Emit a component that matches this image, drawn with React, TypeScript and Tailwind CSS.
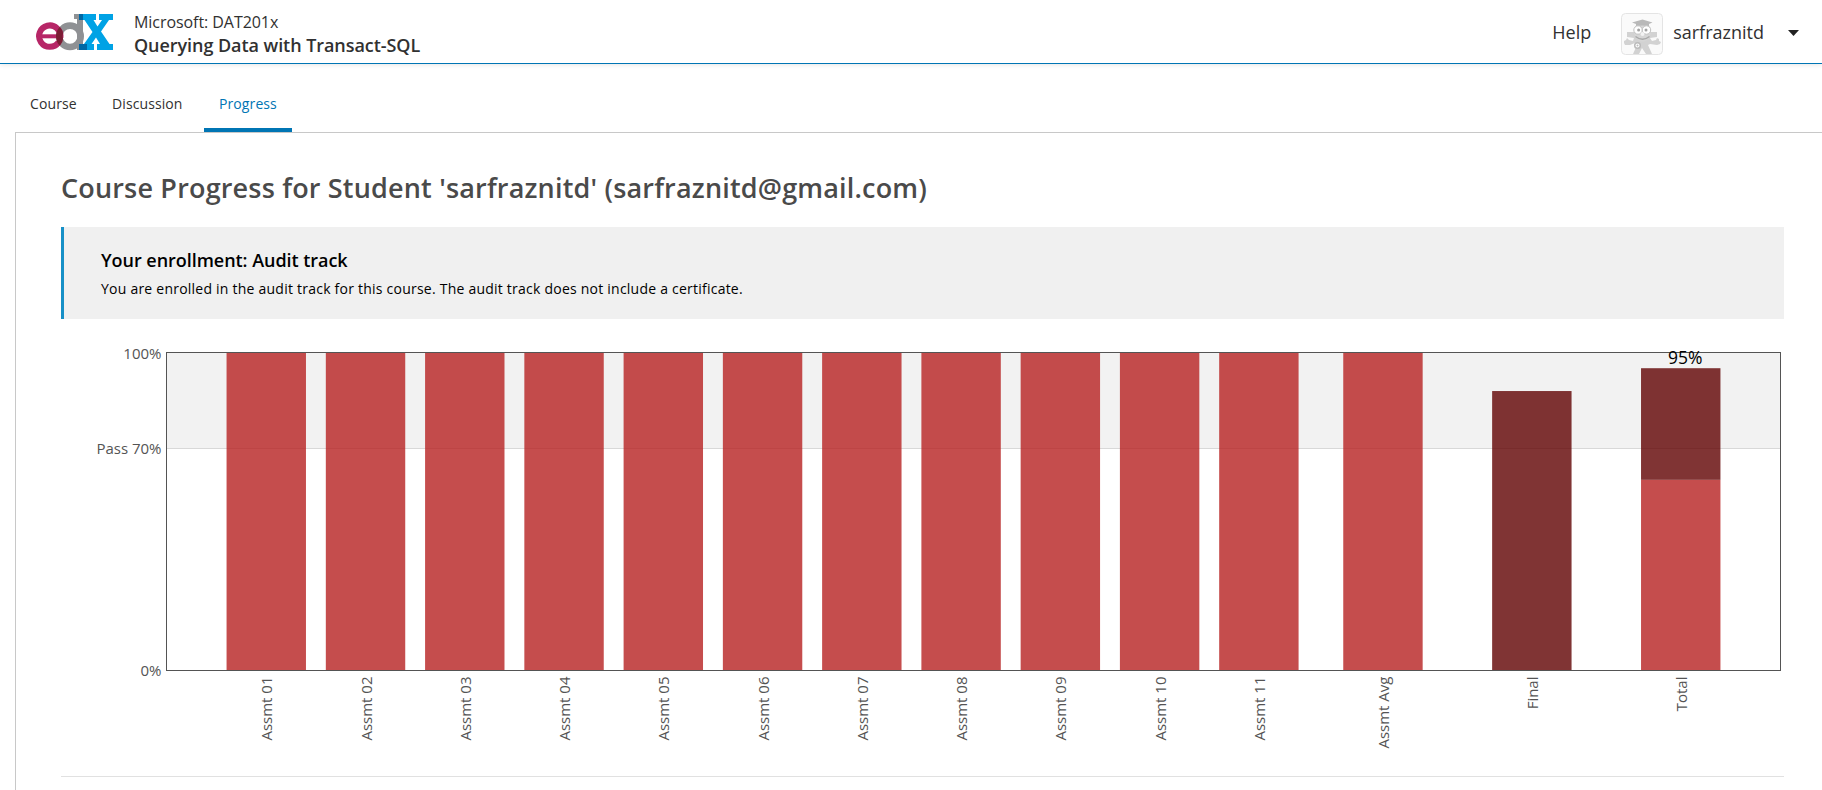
import React from "react";

const RED = "#b72121";
const DARK = "#600101";

const PLOT = { left: 167, right: 1780, top: 353, bottom: 670 };
const UNITS = 16.25;
const OFFSET_X = 61;
const OFFSET_Y = 340;

type Bar = { label: string; start: number; parts: { value: number; color: string }[]; note?: string };

const bars: Bar[] = [
  ...Array.from({ length: 11 }, (_, i) => ({
    label: `Assmt ${String(i + 1).padStart(2, "0")}`,
    start: i + 0.6,
    parts: [{ value: 1, color: RED }],
  })),
  { label: "Assmt Avg", start: 11.85, parts: [{ value: 1, color: RED }] },
  { label: "Final", start: 13.35, parts: [{ value: 0.88, color: DARK }] },
  {
    label: "Total",
    start: 14.85,
    parts: [
      { value: 0.6, color: RED },
      { value: 0.352, color: DARK },
    ],
    note: "95%",
  },
];

function Logo() {
  return (
    <svg width="78" height="38" viewBox="0 0 78 38" aria-label="edX">
      <clipPath id="overlap">
        <circle cx="13.7" cy="23.3" r="13.7" />
      </clipPath>
      <circle cx="34" cy="23.3" r="10.7" fill="none" stroke="#8f9194" strokeWidth="6.6" />
      <path d="M38 1h9v30h4v6H41V6h-3z" fill="#8f9194" />
      <g fill="none" stroke="#b72667">
        <path d="M24.4 24.5A10.7 10.7 0 1 0 22.6 29.2" strokeWidth="6" />
        <path d="M4 23.3H27" strokeWidth="4" />
      </g>
      <circle cx="34" cy="23.3" r="10.7" fill="none" stroke="#7b1d34" strokeWidth="6.6" clipPath="url(#overlap)" />
      <path d="M43 1H60V7H57.5L61.5 13.5L66 7H63V1H77V7H73L65 18.5L73.500 31H77V37H61V31H64L60 24.500L55.500 31H58V37H43V31H48L56.500 19L48.500 7H43Z" fill="#00a2e5" />
      <path d="M43 1h4v6h-4zM43 31h8v6h-8z" fill="#0068a5" />
    </svg>
  );
}

function Avatar() {
  return (
    <svg width="42" height="42" viewBox="0 0 42 42">
      <rect x=".5" y=".5" width="41" height="41" rx="4" fill="#fafafa" stroke="#e4e4e4" />
      <path d="M6 19h30v5l-7 1 2 3 4-1 1-2 2 1v2l2 1-1 2-3 1-7-1-2 1 4 9h-6l-4-6-3 6h-6l4-9-2-2-5 2-5 0-1-2 0-2 2-1 1-2 2 2 4 1 1-3-7-1z" fill="#d2d2d2" />
      <ellipse cx="21.500" cy="18.500" rx="8.500" ry="10" fill="#d6d6d6" />
      <path d="M11 9.500L21.500 6.500l10 3-3.500 1.500v2.500q-6.500-2-13 0V11z" fill="#b9b9b9" />
      <circle cx="17" cy="17" r="4.200" fill="#fff" stroke="#c2c2c2" />
      <circle cx="25.500" cy="17" r="4.200" fill="#fff" stroke="#c2c2c2" />
      <circle cx="17.600" cy="17" r="1.500" fill="#a2a2a2" />
      <circle cx="25" cy="17" r="1.500" fill="#a2a2a2" />
      <circle cx="21.500" cy="21" r="2" fill="#f3f3f3" />
      <path d="M14.500 23.500q7 5.500 14 0" fill="none" stroke="#a8a8a8" strokeWidth="1.500" />
      <circle cx="16.500" cy="32.500" r="2.800" fill="#fff" stroke="#bbb" strokeWidth="1.500" />
      <circle cx="16.500" cy="32.500" r="1" fill="#bbb" />
    </svg>
  );
}

function GradeChart() {
  const unit = (PLOT.right - PLOT.left) / UNITS;
  const height = PLOT.bottom - PLOT.top;
  const left = PLOT.left - OFFSET_X;
  const right = PLOT.right - OFFSET_X;
  const top = PLOT.top - OFFSET_Y;
  const bottom = PLOT.bottom - OFFSET_Y;
  const passY = Math.round(bottom - height * 0.7);
  return (
    <svg width="1723" height="436" className="block overflow-visible">
      <rect x={left} y={top} width={right - left} height={passY - top} fill="#f2f2f2" />
      <rect x={left} y={passY} width={right - left} height="1" fill="#d8d8d8" />
      {bars.map((bar) => {
        let y = bottom;
        const x = left + bar.start * unit;
        return bar.parts.map((part) => {
          y -= part.value * height;
          return (
            <rect key={bar.label + part.color} x={x} y={y} width={unit * 0.8} height={part.value * height} fill={part.color} fillOpacity="0.8" />
          );
        });
      })}
      <rect x={left - 0.5} y={top - 0.5} width={right - left + 1} height={height + 1} fill="none" stroke="#545454" />
      <g className="text-[15px]" fill="#545454">
        <text x="100.5" y="19" textAnchor="end">100%</text>
        <text x="100.5" y="114" textAnchor="end">Pass 70%</text>
        <text x="100.5" y="336" textAnchor="end">0%</text>
        {bars.map((bar) => (
          <text key={bar.label} textAnchor="end" transform={`translate(${Math.round(left + (bar.start + 0.4) * unit) + 6} 336.5) rotate(-90)`}>
            {bar.label}
          </text>
        ))}
      </g>
      {bars.map((bar) =>
        bar.note ? (
          <text key={bar.label} x={left + (bar.start + 0.4) * unit + 4.5} y="24" textAnchor="middle" className="text-[17.5px]" fill="#000">
            {bar.note}
          </text>
        ) : null,
      )}
    </svg>
  );
}

export default function App() {
  return (
    <div className="flex h-[790px] w-full flex-col overflow-hidden bg-white font-['Open_Sans',sans-serif] text-[#313131]">
      <header className="flex h-16 shrink-0 border-b border-[#0075b4] pl-[36px] pr-[23px] shadow-[0_1px_5px_0_rgba(0,0,0,0.1)]">
        <div className="pt-[13px]">
          <Logo />
        </div>
        <div className="ml-5 pt-[11px]">
          <div className="text-[16px] leading-[23px] tracking-[-0.06px]">Microsoft: DAT201x</div>
          <h1 className="text-[18px] font-semibold leading-[23px] tracking-[-0.06px]">Querying Data with Transact-SQL</h1>
        </div>
        <div className="ml-auto flex items-start text-[18px] leading-[26px]">
          <span className="mr-[30px] mt-[19px]">Help</span>
          <span className="mt-[13px]">
            <Avatar />
          </span>
          <span className="ml-[10px] mt-[19px]">sarfraznitd</span>
          <svg width="11" height="6" className="ml-6 mt-[30px]">
            <path d="M0 0h11L5.5 6z" fill="#222" />
          </svg>
        </div>
      </header>
      <nav className="flex h-[68px] shrink-0 items-end pl-[17px] text-[14px] leading-[20px] tracking-[0.1px]">
        <a className="h-12 w-[82px] pl-[13px] pt-[10px]">Course</a>
        <a className="h-12 w-[105px] pl-[13px] pt-[10px]">Discussion</a>
        <a className="h-12 w-[88px] border-b-4 border-[#0075b4] pl-[15px] pt-[10px] text-[#0075b4]">Progress</a>
      </nav>
      <main className="ml-[15px] flex grow flex-col border-l border-t border-[#c8c8c8] pl-[45px] pr-[38px]">
        <h2 className="mt-[36px] h-[58px] text-[27px] font-semibold leading-[38px] tracking-[0.18px] text-[#4a4a4a]">
          Course Progress for Student 'sarfraznitd' (sarfraznitd@gmail.com)
        </h2>
        <section className="h-[92px] shrink-0 border-l-[3px] border-[#1790c7] bg-[#f0f0f0] pl-[37px] pt-5 text-black">
          <h3 className="text-[18px] font-semibold leading-[26px] tracking-[-0.04px]">Your enrollment: Audit track</h3>
          <p className="mt-[5px] text-[14px] leading-[22px] tracking-[0.23px]">
            You are enrolled in the audit track for this course. The audit track does not include a certificate.
          </p>
        </section>
        <div className="mt-[21px] border-b border-[#e1e1e1]">
          <GradeChart />
        </div>
      </main>
    </div>
  );
}
